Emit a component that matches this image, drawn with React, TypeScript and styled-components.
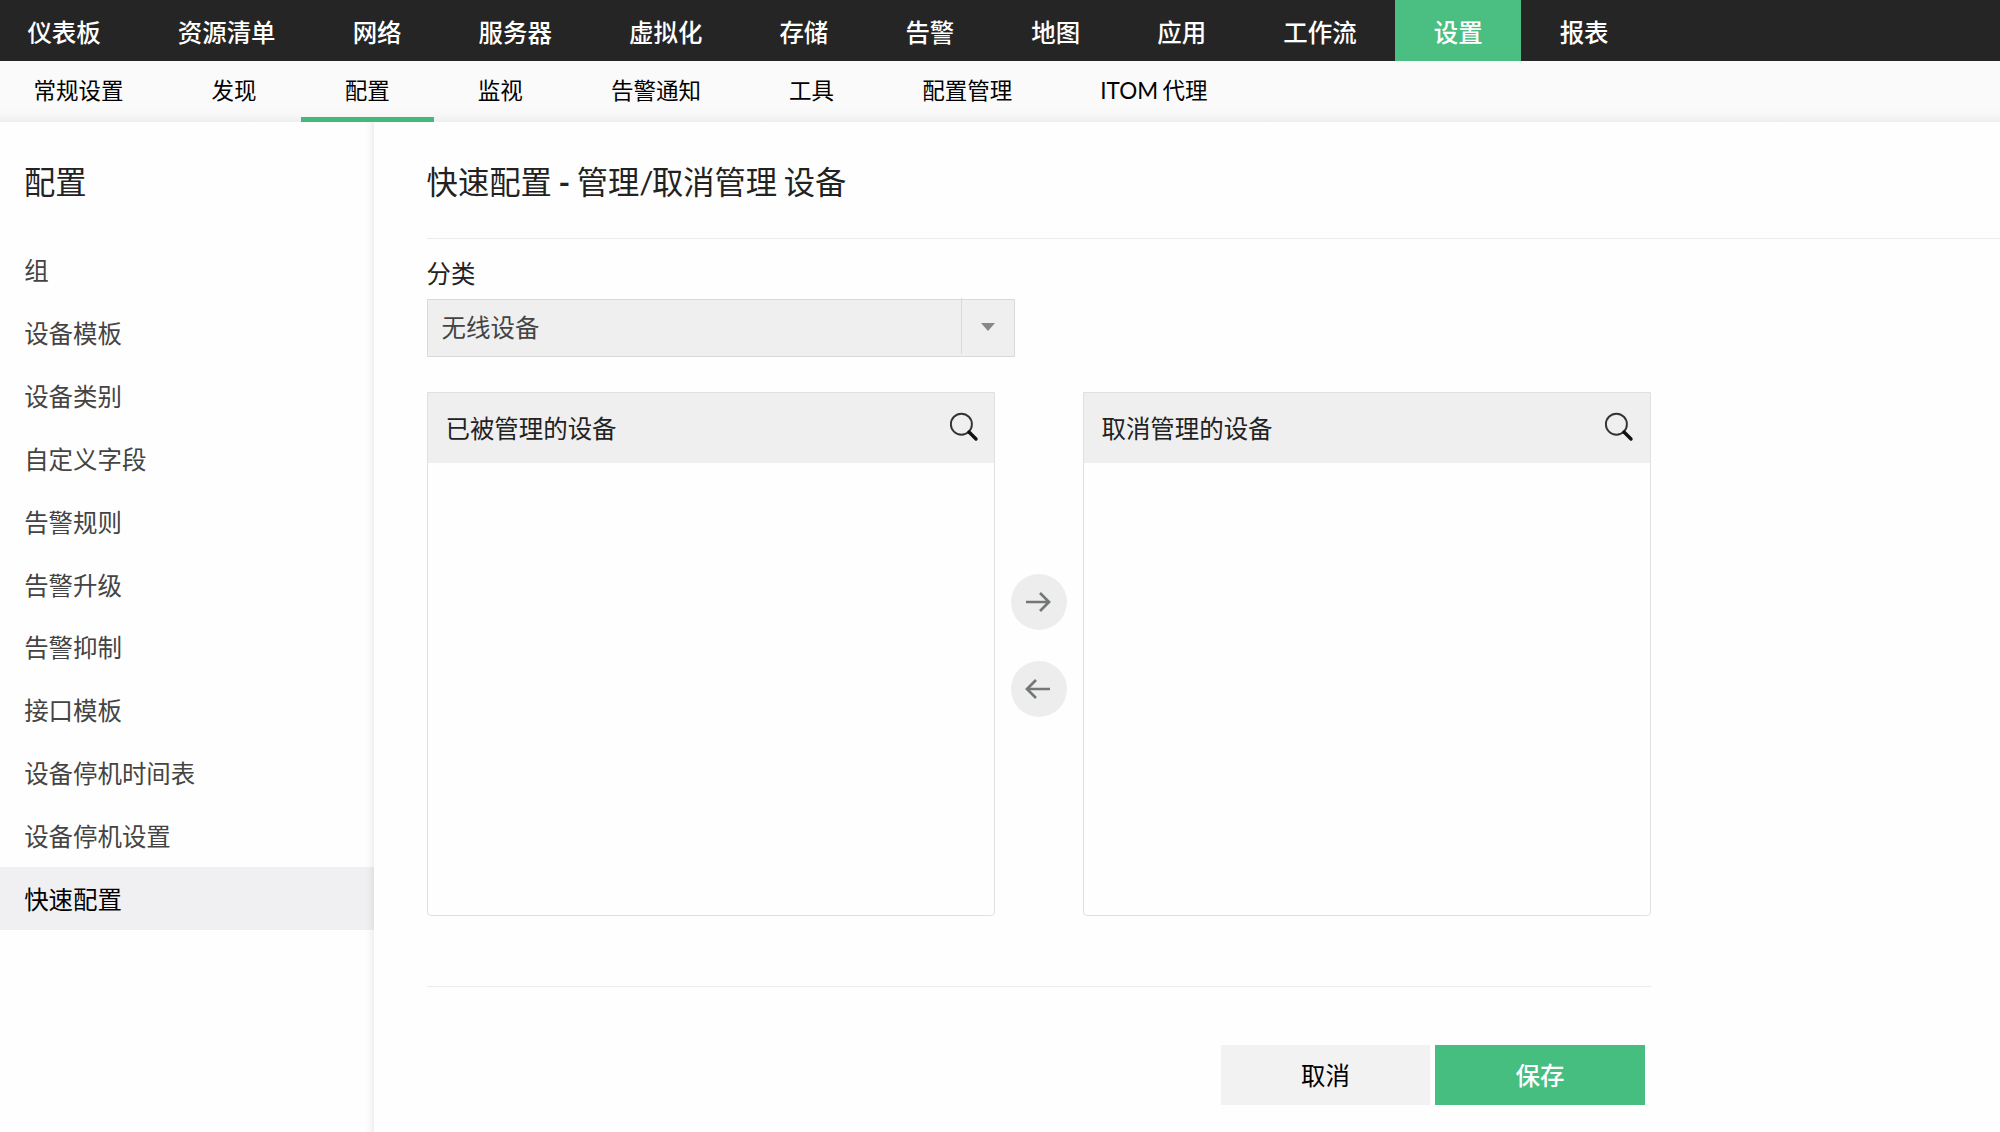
import React from "react";
import styled, { createGlobalStyle } from "styled-components";

const GlobalStyle = createGlobalStyle`
  *, *::before, *::after { box-sizing: border-box; }
  body {
    margin: 0;
    background: #fefefe;
    color: #222;
    font-family: Lato, "Noto Sans CJK SC", sans-serif;
    font-size: 24.45px;
  }
  button { font: inherit; border: 0; padding: 0; cursor: pointer; }
`;

const Page = styled.div`
  display: flex;
  flex-direction: column;
  height: 1132px;
  overflow: hidden;
`;

const TopNav = styled.nav`
  display: flex;
  flex: none;
  height: 61px;
  background: #252525;
`;

const TopItem = styled.a<{ $active?: boolean }>`
  padding: 2px 38.56px 0;
  line-height: 61px;
  font-weight: 500;
  color: #fff;
  white-space: nowrap;
  background: ${(p) => (p.$active ? "#4bbf82" : "transparent")};
  &:first-child { padding-left: 27.4px; }
`;

const SubNav = styled.nav`
  display: flex;
  flex: none;
  height: 61px;
  background: linear-gradient(#fafafa 75%, #f7f7f7 88%, #eeeeee 100%);
`;

const SubItem = styled.a<{ $active?: boolean }>`
  padding: 0 44.06px;
  line-height: 59px;
  font-size: 22.5px;
  word-spacing: -1.2px;
  color: #000;
  white-space: nowrap;
  box-shadow: ${(p) => (p.$active ? "inset 0 -5px #44b87c" : "none")};
  &:first-child { padding-left: 33.5px; }
`;

const Body = styled.div`
  display: flex;
  flex: 1;
  min-height: 0;
`;

const Sidebar = styled.aside`
  flex: none;
  width: 374px;
  padding-top: 28px;
  background: linear-gradient(to left, rgba(0, 0, 0, 0.06), rgba(0, 0, 0, 0.015) 5px, transparent 10px);
`;

const SideTitle = styled.h2`
  margin: 0 0 24.2px;
  padding-left: 24px;
  font-size: 31.3px;
  font-weight: 400;
  line-height: 64px;
`;

const SideItem = styled.a<{ $active?: boolean }>`
  display: block;
  height: 62.88px;
  padding-left: 24.2px;
  line-height: 65.2px;
  color: ${(p) => (p.$active ? "#000" : "#444")};
  background: ${(p) => (p.$active ? "rgba(0, 0, 30, 0.055)" : "transparent")};
`;

const Main = styled.main`
  flex: 1;
  padding: 28px 0 0 53px;
  background: #fefefe;
`;

const Title = styled.h1`
  height: 89px;
  margin: 0;
  border-bottom: 1px solid #ececec;
  font-size: 31.3px;
  font-weight: 400;
  line-height: 64px;
  word-spacing: -1.4px;
  text-indent: -0.4px;
`;

const Dash = styled.span`
  font-weight: 700;
`;

const Slash = styled.span`
  letter-spacing: -1.6px;
`;

const Form = styled.div`
  width: 1224px;
`;

const Label = styled.label`
  display: block;
  height: 60px;
  padding-top: 13px;
  line-height: 44px;
  text-indent: -0.4px;
`;

const Select = styled.div`
  display: flex;
  width: 588px;
  height: 58px;
  border: 1px solid #dadada;
  background: #efefef;
  color: #444;
`;

const SelectValue = styled.span`
  flex: 1;
  padding-left: 13.6px;
  line-height: 56px;
`;

const SelectToggle = styled.span`
  display: flex;
  align-items: center;
  justify-content: center;
  width: 53px;
  height: 56px;
  margin-top: -2px;
  padding-top: 2px;
  border-left: 1px solid #dadada;
`;

const Caret = styled.i`
  border: 7px solid transparent;
  border-top: 8px solid #888;
  border-bottom: 0;
`;

const Transfer = styled.div`
  display: flex;
  justify-content: space-between;
  align-items: stretch;
  height: 524px;
  margin-top: 35px;
`;

const Panel = styled.section`
  width: 568px;
  border: 1px solid #e0e0e0;
  border-radius: 0 0 4px 4px;
`;

const PanelHead = styled.header<{ $inset: number }>`
  display: flex;
  justify-content: space-between;
  height: 70px;
  padding: 0 ${(p) => p.$inset}px 0 17.5px;
  background: #efefef;
  line-height: 71px;
  svg { margin-top: 19px; }
`;

const Arrows = styled.div`
  display: flex;
  flex-direction: column;
  gap: 31px;
  padding-top: 182px;
`;

const RoundButton = styled.button`
  display: flex;
  align-items: center;
  justify-content: center;
  width: 56px;
  height: 56px;
  border-radius: 50%;
  background: #ededed;
  && { padding-right: 2px; }
`;

const Footer = styled.footer`
  display: flex;
  justify-content: flex-end;
  gap: 5px;
  margin-top: 70px;
  padding: 58px 6px 0 0;
  border-top: 1px solid #ececec;
`;

const Button = styled.button<{ $primary?: boolean }>`
  width: ${(p) => (p.$primary ? 210 : 209)}px;
  height: 60px;
  line-height: 59px;
  color: ${(p) => (p.$primary ? "#fff" : "#000")};
  font-weight: ${(p) => (p.$primary ? 500 : 400)};
  background: ${(p) => (p.$primary ? "#46be80" : "#f2f2f2")};
`;

const SearchIcon = () => (
  <svg width="30" height="30" viewBox="0 0 30 30" fill="none">
    <circle cx="12.4" cy="12.2" r="10.5" stroke="#333" strokeWidth="1.9" />
    <path d="M20 20L27 27" stroke="#111" strokeWidth="3.4" strokeLinecap="round" />
  </svg>
);

const ArrowIcon = ({ left }: { left?: boolean }) => (
  <svg width="26" height="20" viewBox="0 0 26 20" fill="none" stroke="#737877" strokeWidth="2.7">
    <path d={left ? "M25 10H2M11 1L2 10L11 19" : "M1 10H24M15 1L24 10L15 19"} />
  </svg>
);

const topItems = ["仪表板", "资源清单", "网络", "服务器", "虚拟化", "存储", "告警", "地图", "应用", "工作流", "设置", "报表"];
const subItems = ["常规设置", "发现", "配置", "监视", "告警通知", "工具", "配置管理", "ITOM 代理"];
const sideItems = ["组", "设备模板", "设备类别", "自定义字段", "告警规则", "告警升级", "告警抑制", "接口模板", "设备停机时间表", "设备停机设置", "快速配置"];

const DevicePanel = ({ title, inset }: { title: string; inset: number }) => (
  <Panel>
    <PanelHead $inset={inset}>
      <span>{title}</span>
      <SearchIcon />
    </PanelHead>
  </Panel>
);

export default function App() {
  return (
    <Page>
      <GlobalStyle />
      <TopNav>
        {topItems.map((t) => <TopItem key={t} $active={t === "设置"}>{t}</TopItem>)}
      </TopNav>
      <SubNav>
        {subItems.map((t) => <SubItem key={t} $active={t === "配置"}>{t}</SubItem>)}
      </SubNav>
      <Body>
        <Sidebar>
          <SideTitle>配置</SideTitle>
          {sideItems.map((t) => <SideItem key={t} $active={t === "快速配置"}>{t}</SideItem>)}
        </Sidebar>
        <Main>
          <Title>快速配置 <Dash>-</Dash> 管理<Slash>/</Slash>取消管理 设备</Title>
          <Form>
            <Label>分类</Label>
            <Select>
              <SelectValue>无线设备</SelectValue>
              <SelectToggle><Caret /></SelectToggle>
            </Select>
            <Transfer>
              <DevicePanel title="已被管理的设备" inset={15} />
              <Arrows>
                <RoundButton aria-label="右移"><ArrowIcon /></RoundButton>
                <RoundButton aria-label="左移"><ArrowIcon left /></RoundButton>
              </Arrows>
              <DevicePanel title="取消管理的设备" inset={16} />
            </Transfer>
            <Footer>
              <Button>取消</Button>
              <Button $primary>保存</Button>
            </Footer>
          </Form>
        </Main>
      </Body>
    </Page>
  );
}
